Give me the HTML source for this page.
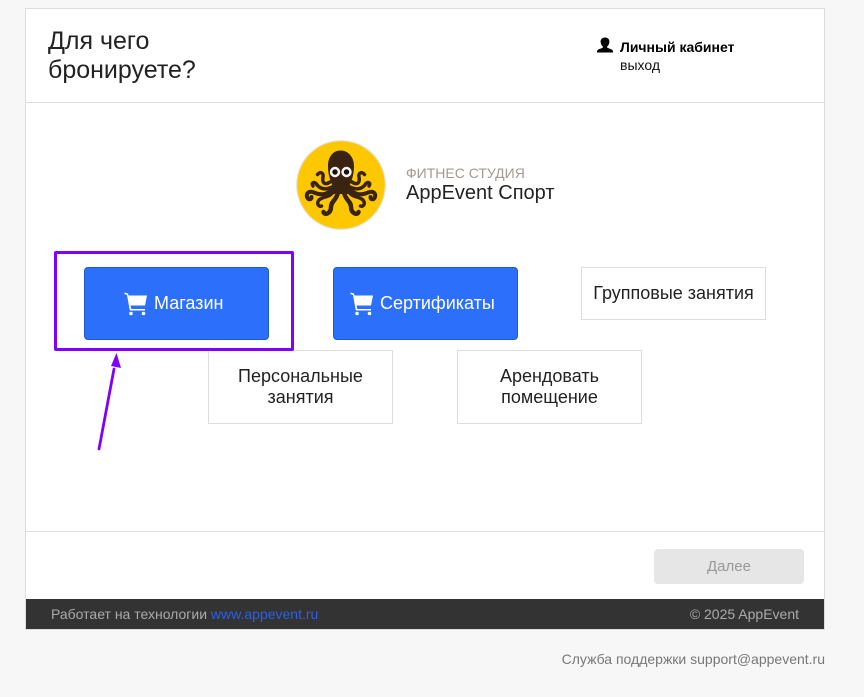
<!DOCTYPE html>
<html lang="ru"><head><meta charset="utf-8"><title>AppEvent</title>
<style>
html,body{margin:0;padding:0}
body{width:864px;height:697px;overflow:hidden;background:#f7f7f7;position:relative;font-family:"Liberation Sans",sans-serif;color:#222}
.a{position:absolute}
.t{position:absolute;white-space:nowrap}
.btn{position:absolute;box-sizing:border-box;background:#fff;border:1px solid #ddd;display:flex;align-items:center;justify-content:center;text-align:center;font-size:18px;line-height:21px;color:#222}
.blue{background:#2b6ffb;border:1px solid #1f5ac9;border-radius:4px}
.bt{position:absolute;top:293px;font-size:18px;line-height:21px;color:#fff;white-space:nowrap}
</style></head><body>
<div class="a" style="left:25px;top:8px;width:800px;height:622px;box-sizing:border-box;background:#fff;border:1px solid #ddd"></div>
<div class="t" style="left:48px;top:27px;font-size:25px;line-height:29px;color:#222">Для чего<br>бронируете?</div>
<svg class="a" style="left:597px;top:37px" width="16" height="16" viewBox="0 0 16 16"><path d="M8 0.500C5 0.500 3.400 2.500 3.600 5C3.800 7 4.600 8.400 5.800 9.400V10.600C4.500 11.700 0.800 11.800 0 14V15.500H16V14C15.200 11.800 11.500 11.700 10.200 10.600V9.400C11.400 8.400 12.200 7 12.400 5C12.600 2.500 11 0.500 8 0.500Z" fill="#000"/></svg>
<div class="t" style="left:620px;top:39px;font-size:14px;line-height:16px;font-weight:bold;color:#000">Личный кабинет</div>
<div class="t" style="left:620px;top:57px;font-size:14px;line-height:16px;color:#111">выход</div>
<div class="a" style="left:26px;top:102px;width:798px;height:1px;background:#ddd"></div>
<svg class="a" style="left:296px;top:140px" width="90" height="90" viewBox="0 0 90 90">
<circle cx="45" cy="45" r="45" fill="#e4e4e4"/><circle cx="45" cy="45" r="43.800" fill="#fdc800"/>
<g fill="none" stroke="#3b2314" stroke-linecap="round" stroke-linejoin="round">
<path d="M34 42C28 46 26 42 27 37C28 33 24 31 21.500 34.500" stroke-width="3.500"/>
<path d="M56 42C62 46 64 42 63 37C62 33 66 31 68.500 34.500" stroke-width="3.500"/>
<path d="M36 47C28 51 23 48 20 43.500C17.500 41 15 43.500 17 46" stroke-width="3.500"/>
<path d="M54 47C62 51 67 48 70 43.500C72.500 41 75 43.500 73 46" stroke-width="3.500"/>
<path d="M38 48C30 56 24 55 18 52.500C13 50.500 10 53 11 57C12 60.500 16 59.500 15.500 57" stroke-width="4"/>
<path d="M52 48C60 56 66 55 72 52.500C77 50.500 80 53 79 57C78 60.500 74 59.500 74.500 57" stroke-width="4"/>
<path d="M38 50C35 58 27 56 23 60C20 64 23 67 25.500 66" stroke-width="3.500"/>
<path d="M52 50C55 58 63 56 67 60C70 64 67 67 64.500 66" stroke-width="3.500"/>
<path d="M42 52C41 60 35 61 35 67C35 73 29 76 27.500 72" stroke-width="4.500"/>
<path d="M48 52C49 60 55 61 55 67C55 73 61 76 62.500 72" stroke-width="4.500"/>
</g>
<path d="M44.500 10.500C37 10.500 32 17 32 26C32 36 35 42 37 47L38 54H52L53 47C55 42 58 36 58 26C58 17 52 10.500 44.500 10.500Z" fill="#3b2314"/>
<circle cx="39" cy="32" r="5.200" fill="#f4f4f4"/><circle cx="50.500" cy="32" r="5.200" fill="#f4f4f4"/>
<circle cx="39" cy="32" r="2.700" fill="#1c120b"/><circle cx="50.500" cy="32" r="2.700" fill="#1c120b"/>
</svg>
<div class="t" style="left:406px;top:165px;font-size:14px;line-height:16px;color:#a09a92">ФИТНЕС СТУДИЯ</div>
<div class="t" style="left:406px;top:182px;font-size:20px;line-height:23px;color:#222">AppEvent Спорт</div>

<div class="btn blue" style="left:84px;top:267px;width:185px;height:73px"></div>
<svg class="a" style="left:124px;top:292px" width="24" height="24" viewBox="0 0 24 24"><path d="M0.500 0.500L4 1.500L4.500 3.500H23L21 13.500H6.500L7.300 17H21V18.500H5.800L3 3L0.500 2Z" fill="#fff"/><circle cx="7" cy="21.500" r="1.800" fill="#fff"/><circle cx="19.500" cy="21.500" r="1.800" fill="#fff"/></svg>
<div class="bt" style="left:154px">Магазин</div>
<div class="btn blue" style="left:333px;top:267px;width:185px;height:73px"></div>
<svg class="a" style="left:350px;top:292px" width="24" height="24" viewBox="0 0 24 24"><path d="M0.500 0.500L4 1.500L4.500 3.500H23L21 13.500H6.500L7.300 17H21V18.500H5.800L3 3L0.500 2Z" fill="#fff"/><circle cx="7" cy="21.500" r="1.800" fill="#fff"/><circle cx="19.500" cy="21.500" r="1.800" fill="#fff"/></svg>
<div class="bt" style="left:380px">Сертификаты</div>
<div class="btn" style="left:581px;top:267px;width:185px;height:53px">Групповые занятия</div>
<div class="btn" style="left:208px;top:350px;width:185px;height:74px">Персональные<br>занятия</div>
<div class="btn" style="left:457px;top:350px;width:185px;height:74px">Арендовать<br>помещение</div>

<div class="a" style="left:54px;top:251px;width:240px;height:100px;box-sizing:border-box;border:3px solid #7f00ff;border-radius:2px"></div>
<svg class="a" style="left:90px;top:345px" width="40" height="110" viewBox="0 0 40 110"><path d="M9 104L24 24" stroke="#7f00ff" stroke-width="2.800" stroke-linecap="round" fill="none"/><path d="M26.500 8L31 23L21 21Z" fill="#7f00ff"/></svg>

<div class="a" style="left:26px;top:531px;width:798px;height:1px;background:#ddd"></div>
<div class="a" style="left:654px;top:549px;width:150px;height:35px;background:#e6e6e6;border-radius:4px;text-align:center;font-size:15px;line-height:35px;color:#999">Далее</div>
<div class="a" style="left:26px;top:599px;width:798px;height:30px;background:#333"></div>
<div class="t" style="left:51px;top:606px;font-size:14px;line-height:16px;color:#aaa">Работает на технологии <span style="color:#2b5fe8">www.appevent.ru</span></div>
<div class="t" style="right:65px;top:606px;font-size:14px;line-height:16px;color:#aaa">© 2025 AppEvent</div>
<div class="t" style="right:39px;top:651px;font-size:14px;line-height:16px;color:#777">Служба поддержки support@appevent.ru</div>
</body></html>
